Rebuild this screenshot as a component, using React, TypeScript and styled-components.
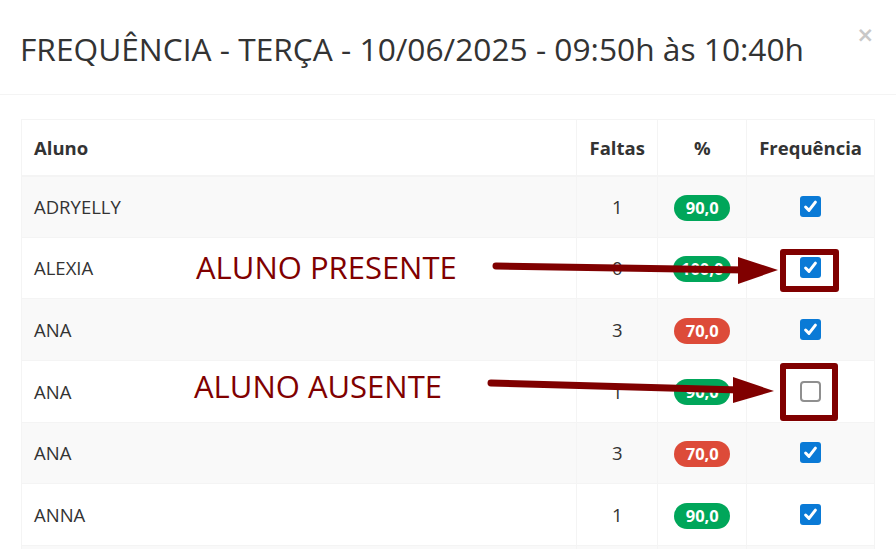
import React from "react";
import styled, { createGlobalStyle } from "styled-components";

const Global = createGlobalStyle`
  html, body { margin: 0; padding: 0; background: #fff; }
  body { font-family: "Open Sans", "Lato", sans-serif; color: #333; }
`;

const Page = styled.div`
  position: relative;
  width: 896px;
  height: 549px;
  overflow: hidden;
  background: #fff;
`;

const Header = styled.div`
  display: flex;
  align-items: flex-start;
  justify-content: space-between;
  height: 95px;
  box-sizing: border-box;
  padding: 25px 22px 0 20px;
  border-bottom: 1px solid #f4f4f4;
`;

const Title = styled.h4`
  margin: 0;
  font-family: "Open Sans", sans-serif;
  font-weight: 400;
  font-size: 31.7px;
  line-height: 48px;
  color: #333;
  white-space: nowrap;
`;

const Close = styled.span`
  font-family: "DejaVu Sans", sans-serif;
  font-weight: 700;
  font-size: 21px;
  line-height: 20px;
  color: #c8c8c8;
`;

const Body = styled.div`
  padding: 24px 21px 0 21px;
`;

const Table = styled.table`
  width: 854px;
  border-collapse: collapse;
  border: 1px solid #f4f4f4;
  font-family: "Open Sans", sans-serif;
  font-size: 18.5px;
`;

const Th = styled.th<{ $w?: number; $center?: boolean }>`
  width: ${(p) => (p.$w ? `${p.$w}px` : "auto")};
  height: 56px;
  padding: 0 12px;
  text-align: ${(p) => (p.$center ? "center" : "left")};
  font-weight: 700;
  font-size: 18.5px;
  color: #333;
  border: 1px solid #f4f4f4;
  border-bottom: 2px solid #f4f4f4;
  box-sizing: border-box;
`;

const Tr = styled.tr<{ $striped: boolean }>`
  background: ${(p) => (p.$striped ? "#f9f9f9" : "#fff")};
`;

const Td = styled.td<{ $center?: boolean }>`
  height: 61.67px;
  padding: 0 12px;
  text-align: ${(p) => (p.$center ? "center" : "left")};
  vertical-align: middle;
  border: 1px solid #f4f4f4;
  color: #333;
  box-sizing: border-box;
`;

const Badge = styled.span<{ $tone: "green" | "red" }>`
  display: inline-block;
  min-width: 56px;
  box-sizing: border-box;
  padding: 0 8px;
  height: 26px;
  line-height: 26px;
  border-radius: 13px;
  font-size: 16.5px;
  font-weight: 700;
  color: #fff;
  text-align: center;
  vertical-align: middle;
  background: ${(p) => (p.$tone === "green" ? "#00a65a" : "#dd4b39")};
`;

const Check = styled.span<{ $on: boolean }>`
  display: flex;
  align-items: center;
  justify-content: center;
  margin: 0 auto;
  width: 21px;
  height: 21px;
  box-sizing: border-box;
  background: ${(p) => (p.$on ? "#0a7ad6" : "#fff")};
  border: ${(p) => (p.$on ? "none" : "2px solid #8f8f8f")};
  border-radius: ${(p) => (p.$on ? "3px" : "4px")};
`;

const Note = styled.div<{ $x: number; $y: number }>`
  position: absolute;
  left: ${(p) => p.$x}px;
  top: ${(p) => p.$y}px;
  font-family: "Open Sans", sans-serif;
  font-size: 31px;
  line-height: 34px;
  color: #800000;
  white-space: nowrap;
`;

const Frame = styled.div<{ $x: number; $y: number; $w: number; $h: number }>`
  position: absolute;
  left: ${(p) => p.$x}px;
  top: ${(p) => p.$y}px;
  width: ${(p) => p.$w}px;
  height: ${(p) => p.$h}px;
  box-sizing: border-box;
  border: 6px solid #800000;
  border-radius: 3px;
`;

const ArrowLayer = styled.svg`
  position: absolute;
  left: 0;
  top: 0;
  pointer-events: none;
`;

const CheckMark = () => (
  <svg width="15" height="15" viewBox="0 0 15 15">
    <path d="M2.6 8 L6 11.4 L12.4 3.2" fill="none" stroke="#fff" strokeWidth="3" strokeLinecap="round" strokeLinejoin="round" />
  </svg>
);

type Row = { name: string; faltas: number; pct: string; on: boolean };
const rows: Row[] = [
  { name: "ADRYELLY", faltas: 1, pct: "90,0", on: true },
  { name: "ALEXIA", faltas: 0, pct: "100,0", on: true },
  { name: "ANA", faltas: 3, pct: "70,0", on: true },
  { name: "ANA", faltas: 1, pct: "90,0", on: false },
  { name: "ANA", faltas: 3, pct: "70,0", on: true },
  { name: "ANNA", faltas: 1, pct: "90,0", on: true },
];

export default function App() {
  return (
    <Page>
      <Global />
      <Header>
        <Title>FREQUÊNCIA - TERÇA - 10/06/2025 - 09:50h às 10:40h</Title>
        <Close>×</Close>
      </Header>
      <Body>
        <Table>
          <thead>
            <tr>
              <Th>Aluno</Th>
              <Th $w={81} $center>Faltas</Th>
              <Th $w={89} $center>%</Th>
              <Th $w={126} $center>Frequência</Th>
            </tr>
          </thead>
          <tbody>
            {rows.map((r, i) => (
              <Tr key={i} $striped={i % 2 === 0}>
                <Td>{r.name}</Td>
                <Td $center>{r.faltas}</Td>
                <Td $center>
                  <Badge $tone={parseFloat(r.pct) >= 75 ? "green" : "red"}>{r.pct}</Badge>
                </Td>
                <Td $center>
                  <Check $on={r.on}>{r.on && <CheckMark />}</Check>
                </Td>
              </Tr>
            ))}
            <Tr $striped>
              <Td />
              <Td />
              <Td />
              <Td />
            </Tr>
          </tbody>
        </Table>
      </Body>

      <Note $x={196} $y={250}>ALUNO PRESENTE</Note>
      <Note $x={194} $y={369}>ALUNO AUSENTE</Note>
      <ArrowLayer width="896" height="549">
        <line x1="496" y1="266" x2="745" y2="270" stroke="#800000" strokeWidth="7" strokeLinecap="round" />
        <polygon points="738,257 778,270 738,284" fill="#800000" />
        <line x1="491" y1="383" x2="740" y2="390" stroke="#800000" strokeWidth="7" strokeLinecap="round" />
        <polygon points="733,377 774,391 733,403" fill="#800000" />
      </ArrowLayer>
      <Frame $x={780} $y={249} $w={59} $h={43} />
      <Frame $x={780} $y={363} $w={58} $h={58} />
    </Page>
  );
}
